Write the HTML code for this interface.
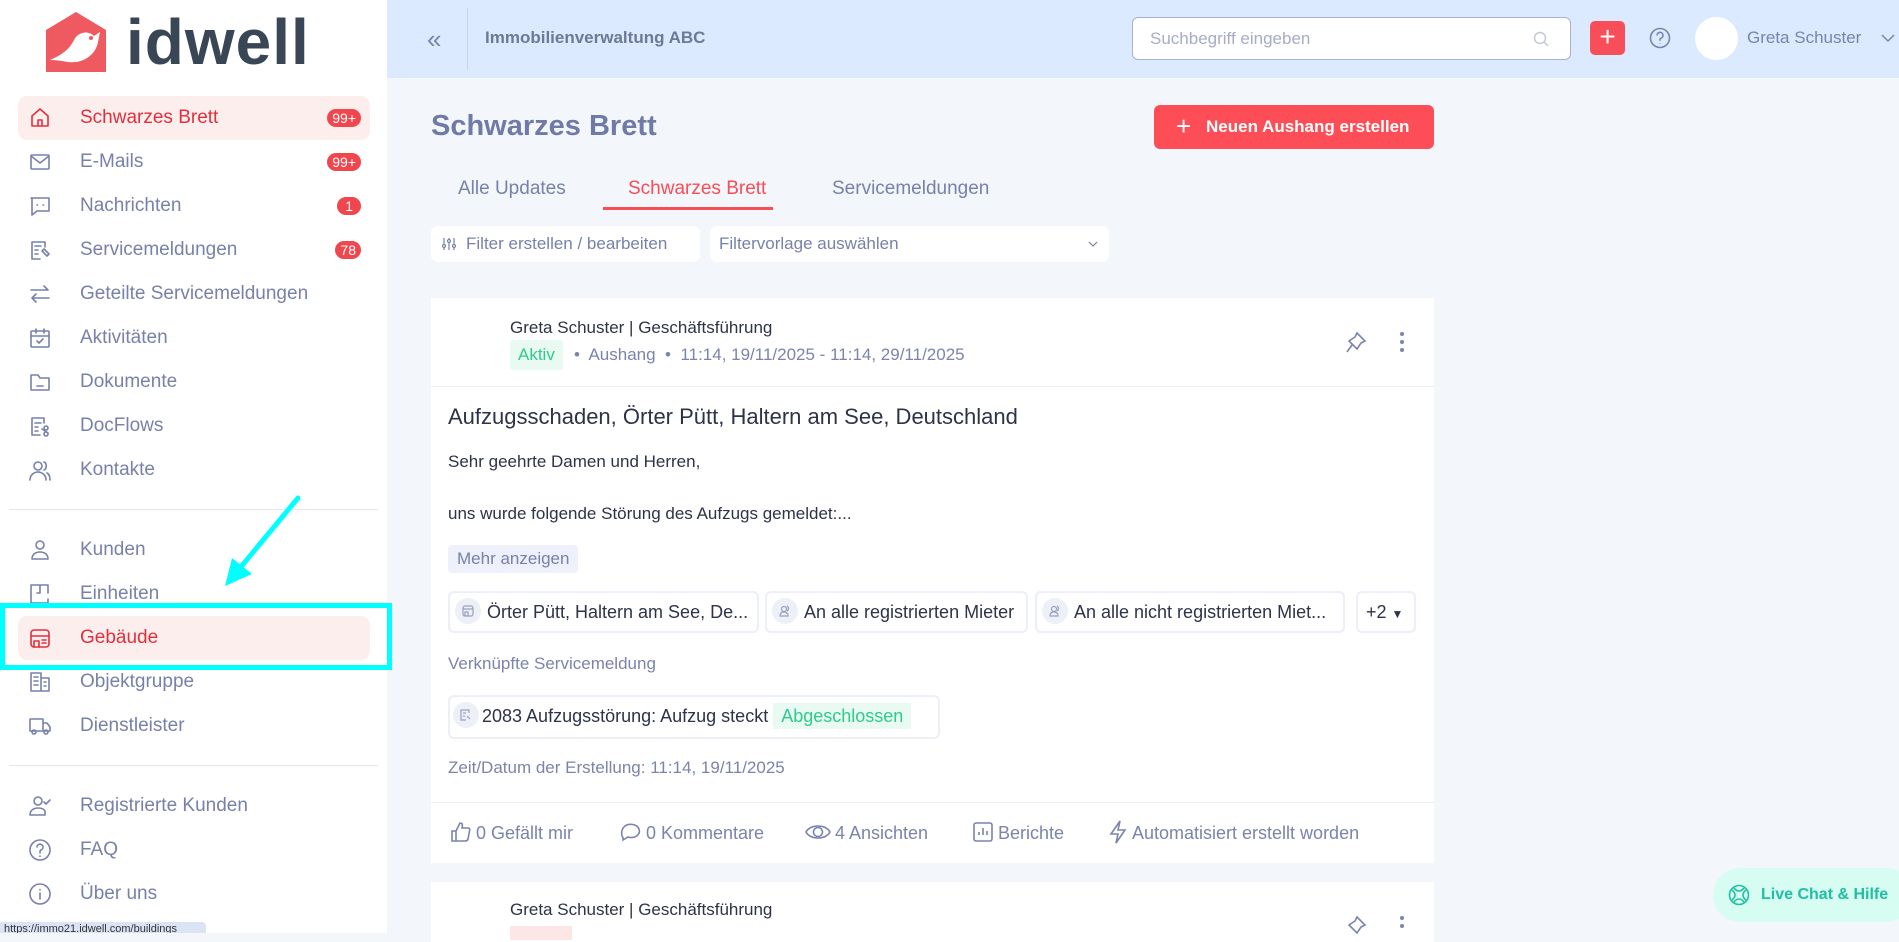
<!DOCTYPE html>
<html><head><meta charset="utf-8"><style>
*{box-sizing:border-box;margin:0;padding:0}
body{width:1899px;height:933px;overflow:hidden;background:#f3f6fb;font-family:"Liberation Sans",sans-serif;position:relative;color:#7a84ac}
.a{position:absolute;white-space:nowrap}
#side{position:absolute;left:0;top:0;width:387px;height:933px;background:#fff}
.nav{position:absolute;left:18px;width:352px;height:44px;border-radius:9px;font-size:19px;color:#7781aa;line-height:44px}
.nav .t{position:absolute;left:62px;top:0}
.nav svg{position:absolute;left:11px;top:11px;width:22px;height:22px;fill:none;stroke:#7781aa;stroke-width:1.6;stroke-linecap:round;stroke-linejoin:round}
.nav.act{background:#fdeeee;color:#e0303d}
.nav.act svg{stroke:#e0303d}
.badge{position:absolute;right:9px;top:13px;height:18px;border-radius:9px;background:#f0474f;color:#fff;font-size:14px;line-height:18px;padding:0 5px}
.hr{position:absolute;left:9px;width:369px;height:1px;background:#e6e8f0}
#hdr{position:absolute;left:387px;top:0;right:0;height:78px;background:#dbeafe}
.card{position:absolute;left:431px;width:1003px;background:#fff}
.chip{position:absolute;top:591px;height:42px;border:2px solid #eceef8;border-radius:6px;font-size:18px;color:#2d3348;line-height:38px}
.ic{display:inline-block;width:26px;height:26px;border-radius:13px;background:#eef0f8;vertical-align:middle;margin:0 6px 0 5px;position:relative;top:-2px}
.ic svg{position:absolute;left:7px;top:7px;fill:none;stroke:#9aa1c0;stroke-width:1.2}
.foot{position:absolute;top:820px;font-size:18px;color:#7a84ac;line-height:26px}
.foot svg{vertical-align:middle;fill:none;stroke:#7a84ac;stroke-width:1.6;margin-right:4px;position:relative;top:-2px}
</style></head><body>
<div id="side">
 <svg class="a" style="left:44px;top:10px" width="64" height="64" viewBox="0 0 64 64"><path d="M2 20 L32 2 L62 20 L62 62 L2 62 Z" fill="#ee5a60"/><path d="M6 50 C20 44 26 38 30 30 C34 22 44 20 50 26 L56 22 L54 32 C52 44 40 54 24 52 C18 51 12 50 6 50Z" fill="#fff"/><circle cx="47" cy="28" r="2" fill="#ee5a60"/></svg>
 <div class="a" style="left:126px;top:2px;font-size:64px;font-weight:bold;color:#384656;letter-spacing:1px;line-height:80px">idwell</div>
 <div class="nav act" style="top:96px"><svg viewBox="0 0 22 22"><path d="M3 9 L11 2 L19 9 V19 H3 Z M9 19 V13 H13 V19"/></svg><span class="t">Schwarzes Brett</span><span class="badge">99+</span></div>
 <div class="nav" style="top:140px"><svg viewBox="0 0 22 22"><rect x="2" y="4" width="18" height="14" rx="1"/><path d="M2 5 L11 12 L20 5"/></svg><span class="t">E-Mails</span><span class="badge">99+</span></div>
 <div class="nav" style="top:184px"><svg viewBox="0 0 22 22"><path d="M2 3 H20 V16 H8 L3 20 V3"/><path d="M8 10h.5M14 10h.5"/></svg><span class="t">Nachrichten</span><span class="badge" style="padding:0 8px">1</span></div>
 <div class="nav" style="top:228px"><svg viewBox="0 0 22 22"><path d="M16 8V3H3v17h8M6 7h6M6 11h3M6 15h3"/><path d="M13 12l5 5 2-2-5-5z"/></svg><span class="t">Servicemeldungen</span><span class="badge">78</span></div>
 <div class="nav" style="top:272px"><svg viewBox="0 0 22 22"><path d="M2 7H19M15 3L19 7M20 15H3M7 11L3 15L7 19"/></svg><span class="t">Geteilte Servicemeldungen</span></div>
 <div class="nav" style="top:316px"><svg viewBox="0 0 22 22"><rect x="2" y="4" width="18" height="16" rx="1"/><path d="M2 9H20M7 2V6M15 2V6M8 14L10 16L14 12"/></svg><span class="t">Aktivitäten</span></div>
 <div class="nav" style="top:360px"><svg viewBox="0 0 22 22"><path d="M2 4H9L11 7H20V19H2Z M8 15H14"/></svg><span class="t">Dokumente</span></div>
 <div class="nav" style="top:404px"><svg viewBox="0 0 22 22"><path d="M15 8V3H3V20H11M6 8h6M6 12h3M6 16h3"/><circle cx="17" cy="13" r="2"/><circle cx="17" cy="19" r="2"/><path d="M13 14l6 4"/></svg><span class="t">DocFlows</span></div>
 <div class="nav" style="top:448px"><svg viewBox="0 0 22 22"><circle cx="9" cy="7" r="4"/><path d="M1 21c0-5 4-8 8-8s8 3 8 8M15 3c3 1 3 7 0 8M18 14c2 1 3 4 3 7"/></svg><span class="t">Kontakte</span></div>
 <div class="hr" style="top:509px"></div>
 <div class="nav" style="top:528px"><svg viewBox="0 0 22 22"><circle cx="11" cy="6" r="4"/><path d="M3 20c0-5 4-7 8-7s8 2 8 7Z"/></svg><span class="t">Kunden</span></div>
 <div class="nav" style="top:572px"><svg viewBox="0 0 22 22"><path d="M2 2H19V10M2 2V20H19V16M11 2V10H8"/></svg><span class="t">Einheiten</span></div>
 <div class="nav act" style="top:616px"><svg viewBox="0 0 22 22"><rect x="2" y="3" width="18" height="17" rx="3"/><path d="M2 9H20M5 20V14H10V20M13 13H17M13 16H17"/></svg><span class="t">Gebäude</span></div>
 <div class="nav" style="top:660px"><svg viewBox="0 0 22 22"><path d="M2 20V2H12V20M12 7H20V20H2M5 6H9M5 10H9M5 14H9M15 11H17M15 15H17"/></svg><span class="t">Objektgruppe</span></div>
 <div class="nav" style="top:704px"><svg viewBox="0 0 22 22"><path d="M1 4H14V16H1ZM14 8H18L21 12V16H14"/><circle cx="5" cy="17" r="2"/><circle cx="17" cy="17" r="2"/></svg><span class="t">Dienstleister</span></div>
 <div class="hr" style="top:765px"></div>
 <div class="nav" style="top:784px"><svg viewBox="0 0 22 22"><circle cx="9" cy="6" r="4"/><path d="M1 20c0-5 4-7 8-7s6 1 7 3V20Z M15 7L17 9L21 5"/></svg><span class="t">Registrierte Kunden</span></div>
 <div class="nav" style="top:828px"><svg viewBox="0 0 22 22"><circle cx="11" cy="11" r="10"/><path d="M8 8a3 3 0 1 1 4 3c-1 .5-1 1-1 3M11 17v.5"/></svg><span class="t">FAQ</span></div>
 <div class="nav" style="top:872px"><svg viewBox="0 0 22 22"><circle cx="11" cy="11" r="10"/><path d="M11 10V16M11 6.5v.5"/></svg><span class="t">Über uns</span></div>
 <div class="a" style="left:0;top:603px;width:392px;height:67px;border:5px solid #00ffff"></div>
 <svg class="a" style="left:220px;top:490px" width="90" height="100"><path d="M78 8 L15 84" stroke="#00ffff" stroke-width="5" stroke-linecap="round"/><path d="M5 96 L12 68 L32 84Z" fill="#00ffff"/></svg>
 <div class="a" style="left:0;top:922px;width:206px;height:11px;background:#dbe4f5;border-radius:0 4px 0 0;font-size:11px;color:#333;line-height:14px;padding-left:4px;overflow:hidden">https://immo21.idwell.com/buildings</div>
</div>
<div id="hdr">
 <div class="a" style="left:40px;top:24px;font-size:26px;color:#7a84ac">«</div>
 <div class="a" style="left:80px;top:8px;width:1px;height:62px;background:#c9d6ea"></div>
 <div class="a" style="left:98px;top:28px;font-size:17px;font-weight:bold;color:#6f7894">Immobilienverwaltung ABC</div>
 <div class="a" style="left:745px;top:17px;width:439px;height:43px;background:#fff;border:1.5px solid #a9b1cc;border-radius:6px"><span class="a" style="left:17px;top:11px;font-size:17px;color:#a6acc6">Suchbegriff eingeben</span><svg class="a" style="left:400px;top:13px" width="16" height="16" fill="none" stroke="#c3c7d6" stroke-width="1.5"><circle cx="7" cy="7" r="5.5"/><path d="M11 11L15 15"/></svg></div>
 <div class="a" style="left:1203px;top:21px;width:35px;height:34px;background:#f84e59;border-radius:5px;color:#fff;font-size:28px;text-align:center;line-height:32px">+</div>
 <svg class="a" style="left:1262px;top:27px" width="22" height="22" fill="none" stroke="#7a84ac" stroke-width="1.6"><circle cx="11" cy="11" r="9.5"/><path d="M8 8.5a3 3 0 1 1 4 2.7c-1 .5-1 1-1 2.5M11 16v.5"/></svg>
 <div class="a" style="left:1308px;top:17px;width:43px;height:43px;border-radius:50%;background:#fff"></div>
 <div class="a" style="left:1360px;top:28px;font-size:17px;color:#7a84ac">Greta Schuster</div>
 <svg class="a" style="left:1494px;top:33px" width="14" height="10" fill="none" stroke="#7a84ac" stroke-width="1.5"><path d="M1 2L7 8L13 2"/></svg>
</div>
<div class="a" style="left:431px;top:110px;font-size:29px;font-weight:bold;color:#6f7aa6">Schwarzes Brett</div>
<div class="a" style="left:1154px;top:105px;width:280px;height:44px;background:#fd4e57;border-radius:6px;color:#fff;font-size:17px;font-weight:bold;line-height:44px;padding-left:52px"><span style="position:absolute;left:22px;top:-1px;font-size:26px;font-weight:normal">+</span>Neuen Aushang erstellen</div>
<div class="a" style="left:458px;top:178px;font-size:19px;color:#7781aa">Alle Updates</div>
<div class="a" style="left:628px;top:178px;font-size:19px;color:#f84d56">Schwarzes Brett</div>
<div class="a" style="left:603px;top:207px;width:170px;height:3px;background:#f84d56"></div>
<div class="a" style="left:832px;top:178px;font-size:19px;color:#7781aa">Servicemeldungen</div>
<div class="a" style="left:431px;top:226px;width:269px;height:36px;background:#fff;border-radius:7px;font-size:17px;line-height:36px;padding-left:35px;color:#7781aa">Filter erstellen / bearbeiten<svg class="a" style="left:11px;top:11px" width="14" height="14" fill="none" stroke="#7781aa" stroke-width="1.2"><path d="M2 1V13M7 1V13M12 1V13"/><circle cx="2" cy="9" r="1.5" fill="#fff"/><circle cx="7" cy="4" r="1.5" fill="#fff"/><circle cx="12" cy="9" r="1.5" fill="#fff"/></svg></div>
<div class="a" style="left:710px;top:226px;width:399px;height:36px;background:#fff;border-radius:7px;font-size:17px;line-height:36px;padding-left:9px;color:#7781aa">Filtervorlage auswählen<svg class="a" style="left:378px;top:15px" width="10" height="7" fill="none" stroke="#7781aa" stroke-width="1.2"><path d="M1 1L5 5L9 1"/></svg></div>

<div class="card" style="top:298px;height:565px">
 <div class="a" style="left:79px;top:20px;font-size:17px;color:#2d3348">Greta Schuster | Geschäftsführung</div>
 <div class="a" style="left:79px;top:42px;height:30px;padding:0 8px;background:#e8faf2;color:#2fcb8c;font-size:17px;line-height:30px;border-radius:3px">Aktiv</div>
 <div class="a" style="left:143px;top:47px;font-size:17px;color:#7a84ac">•&nbsp; Aushang &nbsp;•&nbsp; 11:14, 19/11/2025 - 11:14, 29/11/2025</div>
 <svg class="a" style="left:914px;top:33px" width="22" height="24" fill="none" stroke="#7a84ac" stroke-width="1.6"><path d="M12 2L20 10L16 12L12 18L4 10L10 6Z M7 14L2 21"/></svg>
 <svg class="a" style="left:968px;top:33px" width="6" height="22" fill="#7a84ac"><circle cx="3" cy="3" r="2"/><circle cx="3" cy="11" r="2"/><circle cx="3" cy="19" r="2"/></svg>
 <div class="a" style="left:0;top:88px;width:1003px;height:1px;background:#eceef5"></div>
 <div class="a" style="left:17px;top:106px;font-size:22px;color:#2d3348">Aufzugsschaden, Örter Pütt, Haltern am See, Deutschland</div>
 <div class="a" style="left:17px;top:154px;font-size:17px;color:#2d3348">Sehr geehrte Damen und Herren,</div>
 <div class="a" style="left:17px;top:206px;font-size:17px;color:#2d3348">uns wurde folgende Störung des Aufzugs gemeldet:...</div>
 <div class="a" style="left:17px;top:247px;height:28px;padding:0 9px;background:#eef1fb;border-radius:4px;font-size:17px;line-height:28px;color:#7781aa">Mehr anzeigen</div>
</div>
<div class="chip" style="left:448px;width:311px"><span class="ic"><svg width="12" height="12"><rect x="1" y="1" width="10" height="10" rx="2"/><path d="M1 4H11M3 11V7H6V11"/></svg></span>Örter Pütt, Haltern am See, De...</div>
<div class="chip" style="left:765px;width:263px"><span class="ic"><svg width="12" height="12"><circle cx="5" cy="4" r="2.5"/><path d="M1 11c0-3 2-4 4-4s4 1 4 4ZM8 1c2 1 2 4 0 5"/></svg></span>An alle registrierten Mieter</div>
<div class="chip" style="left:1035px;width:310px"><span class="ic"><svg width="12" height="12"><circle cx="5" cy="4" r="2.5"/><path d="M1 11c0-3 2-4 4-4s4 1 4 4ZM8 1c2 1 2 4 0 5"/></svg></span>An alle nicht registrierten Miet...</div>
<div class="chip" style="left:1356px;width:60px;padding-left:8px">+2 <span style="font-size:12px">▼</span></div>
<div class="a" style="left:448px;top:654px;font-size:17px;color:#7a84ac">Verknüpfte Servicemeldung</div>
<div class="chip" style="left:448px;top:695px;width:492px;height:44px"><span class="ic" style="margin:0 3px 0 3px"><svg width="12" height="12"><path d="M9 4V1H1v10h5M3 4h3M3 7h2"/><path d="M7 7l3 3"/></svg></span>2083 Aufzugsstörung: Aufzug steckt <span style="background:#e8faf2;color:#2fcb8c;padding:3px 8px">Abgeschlossen</span></div>
<div class="a" style="left:448px;top:758px;font-size:17px;color:#7a84ac">Zeit/Datum der Erstellung: 11:14, 19/11/2025</div>
<div class="a" style="left:431px;top:802px;width:1003px;height:1px;background:#eceef5"></div>
<div class="foot" style="left:450px"><svg width="22" height="22"><path d="M2 10H6V20H2ZM6 10L10 2C12 2 13 3 12 7H18C20 7 20 9 19.5 10L18 18C17.5 20 16 20 15 20H6"/></svg>0 Gefällt mir</div>
<div class="foot" style="left:620px"><svg width="22" height="22"><path d="M3 17C1 14 1 8 5 5C9 2 17 3 19 8C21 14 14 18 8 16L3 19Z"/></svg>0 Kommentare</div>
<div class="foot" style="left:805px"><svg width="26" height="22"><path d="M1 11C5 3 21 3 25 11C21 19 5 19 1 11Z"/><circle cx="13" cy="11" r="4.5"/></svg>4 Ansichten</div>
<div class="foot" style="left:972px"><svg width="22" height="22"><rect x="2" y="2" width="18" height="18" rx="2"/><path d="M7 14V11M11 14V7M15 14V10"/></svg>Berichte</div>
<div class="foot" style="left:1108px"><svg width="20" height="24"><path d="M12 1L3 14H10L8 23L17 10H10Z"/></svg>Automatisiert erstellt worden</div>

<div class="card" style="top:882px;height:60px">
 <div class="a" style="left:79px;top:18px;font-size:17px;color:#2d3348">Greta Schuster | Geschäftsführung</div>
 <div class="a" style="left:79px;top:44px;width:62px;height:14px;background:#fde6e6"></div>
 <svg class="a" style="left:914px;top:33px" width="22" height="24" fill="none" stroke="#7a84ac" stroke-width="1.6"><path d="M12 2L20 10L16 12L12 18L4 10L10 6Z"/></svg>
 <svg class="a" style="left:968px;top:33px" width="6" height="22" fill="#7a84ac"><circle cx="3" cy="3" r="2"/><circle cx="3" cy="11" r="2"/></svg>
</div>
<div class="a" style="left:1713px;top:868px;width:200px;height:54px;border-radius:27px;background:#d7fcf2;color:#1fbfa2;font-size:16px;font-weight:bold;line-height:54px;padding-left:48px"><svg class="a" style="left:15px;top:16px" width="22" height="22" fill="none" stroke="#1fbfa2" stroke-width="1.6"><circle cx="11" cy="11" r="9.5"/><path d="M4 6C8 9 8 13 4 16M18 6C14 9 14 13 18 16M6 4C9 8 13 8 16 4M6 18C9 14 13 14 16 18"/></svg>Live Chat &amp; Hilfe</div>
</body></html>
